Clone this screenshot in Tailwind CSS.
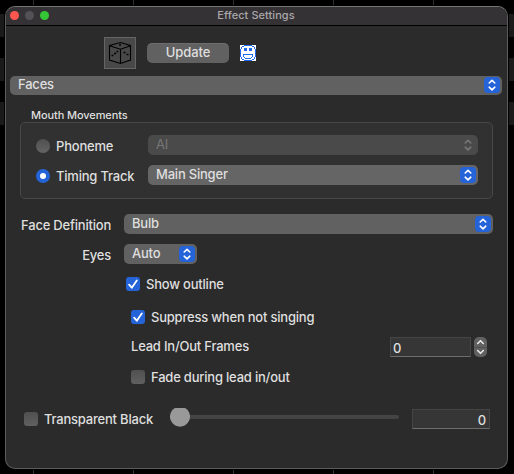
<!DOCTYPE html>
<html lang="en">
<head>
<meta charset="utf-8">
<title>Effect Settings</title>
<script src="https://cdn.jsdelivr.net/npm/@tailwindcss/browser@4"></script>
</head>
<body class="bg-black font-[Inter,sans-serif] text-[13px] leading-4 tracking-[-0.21px] text-[#dfdfdf] w-[514px] h-[474px] overflow-hidden">
<svg class="hidden">
  <symbol id="updown" viewBox="0 0 16 16"><path d="M5.2 6 8 3.3 10.8 6M5.2 10.2 8 12.9 10.8 10.2" fill="none" stroke="currentColor" stroke-width="1.6" stroke-linecap="round" stroke-linejoin="round"/></symbol>
  <symbol id="tick" viewBox="0 0 14 14"><path d="M3.1 7.6 5.8 10.7 10.8 3.4" fill="none" stroke="#fff" stroke-width="1.8" stroke-linecap="round" stroke-linejoin="round"/></symbol>
</svg>
<div class="relative w-[514px] h-[474px] pl-[5px] pt-[6px]">
  <!-- timeline grid behind the window -->
  <svg class="absolute left-0 top-0" width="514" height="474" shape-rendering="crispEdges">
    <path d="M0 14H514V37H0ZM0 58H514V81H0ZM0 102H514V125H0Z" fill="#1a1a1a"/>
    <path d="M4 0H5V474H4ZM508 0H509V474H508Z" fill="#000"/>
    <path d="M33 0h1v5h-1zM133 0h1v5h-1zM233 0h1v5h-1zM333 0h1v5h-1zM433 0h1v5h-1zM33 470h1v4h-1zM133 470h1v4h-1zM233 470h1v4h-1zM333 470h1v4h-1zM433 470h1v4h-1z" fill="#303030"/>
  </svg>

  <main class="relative w-[503px] h-[463px] rounded-[10px] border border-[#5c5c5c] border-t-[#777478] bg-[#2b2b2b] overflow-hidden">
    <header class="h-[19px] bg-[#353236] border-b border-black flex items-center pl-1 pr-[4px]">
      <div class="flex gap-[6px] w-[100px] relative -top-[0.5px]">
        <span class="size-[9px] rounded-full bg-[#fc5650]"></span>
        <span class="size-[9px] rounded-full bg-[#545156]"></span>
        <span class="size-[9px] rounded-full bg-[#35c636]"></span>
      </div>
      <h1 class="flex-1 text-center text-[11px] tracking-[0.05px] text-[#a9a7aa] font-medium pr-[101px] relative -top-px">Effect Settings</h1>
    </header>

    <div class="flex items-center h-8 mt-[11px] pl-[98px]">
      <div class="size-8 bg-[#484848] border border-[#656565] grid place-items-center">
        <svg width="30" height="30" viewBox="0 0 30 30" fill="none" stroke="#000" stroke-width="1.1"><path d="M4.5 7.5 15.5 4.5 25.5 7.5V22L15.5 25.5 4.5 22ZM4.5 7.8 15.5 11.2 25.5 7.8M15.5 11.2V25.5"/><path d="M14 7h2M6.5 17.5h2M9 15.5h2.2M11.5 13.5h1.7M18.5 14.5h2M21.5 16.5h2" stroke-width="1.6"/></svg>
      </div>
      <button class="ml-[11px] w-[82px] h-5 rounded-[5px] bg-[#616161] border-t border-[#6d6d6d] font-medium text-center leading-[16px] pb-[3px] tracking-[-0.1px]">Update</button>
      <svg class="ml-[11px]" width="16" height="16" viewBox="0 0 16 16" shape-rendering="crispEdges"><path d="M0 0h16v16H0z" fill="#fff"/><path d="M4 0h8v1H4zM2 1h2v1H2zM12 1h2v1h-2zM1 2h1v2H1zM14 2h1v2h-1zM0 4h1v8H0zM15 4h1v8h-1zM1 12h1v2H1zM14 12h1v2h-1zM2 14h2v1H2zM12 14h2v1h-2zM4 15h8v1H4zM4 3h3v3H4zM9 3h3v3H9zM3 9h10v1H3zM3 10h1v2H3zM12 10h1v2h-1zM4 12h1v1H4zM11 12h1v1h-1zM5 13h6v1H5z" fill="#1f68ef"/></svg>
    </div>

    <div class="ml-1 mt-[7px] w-[492px] h-[19px] rounded-[5px] bg-[#616161] flex items-center justify-between pl-2 pr-[2px] font-medium">
      <span class="relative -top-[1.5px]">Faces</span>
      <span class="size-4 rounded-[4px] bg-[#2463d8] text-white relative -top-[0.5px]"><svg class="size-4"><use href="#updown"/></svg></span>
    </div>

    <h2 class="mt-[12px] pl-[25px] h-[15px] text-[11px] font-medium tracking-[-0.1px]">Mouth Movements</h2>
    <section class="ml-[14px] w-[473px] h-[77px] rounded-[5px] border border-[#484848] bg-[#313131] pt-[12px] pl-[15px]">
      <div class="flex items-center h-5">
        <span class="size-[14px] rounded-full bg-linear-to-b from-[#505050] to-[#646464] relative top-[1px]"></span>
        <span class="ml-[6px] w-[92px] relative top-[1px] font-medium">Phoneme</span>
        <div class="w-[330px] h-5 rounded-[5px] bg-[#4a4a4a] text-[#777] flex items-center justify-between pl-2 pr-[2px]"><span class="relative -top-px">AI</span><svg class="size-4"><use href="#updown"/></svg></div>
      </div>
      <div class="flex items-center h-5 mt-[10px]">
        <span class="size-[14px] rounded-full bg-[#2463d8] grid place-items-center relative top-[1px]"><i class="size-[6px] rounded-full bg-white"></i></span>
        <span class="ml-[6px] w-[92px] relative top-[1px] font-medium">Timing Track</span>
        <div class="w-[330px] h-5 rounded-[5px] bg-[#656565] flex items-center justify-between pl-2 pr-[2px] font-medium"><span class="relative -top-px">Main Singer</span><span class="size-4 rounded-[4px] bg-[#2463d8] text-white"><svg class="size-4"><use href="#updown"/></svg></span></div>
      </div>
    </section>

    <div class="flex items-center h-5 mt-[15px] font-medium">
      <span class="w-[105px] text-right relative top-[1px] whitespace-nowrap">Face Definition</span>
      <div class="ml-[13px] w-[369px] h-5 rounded-[5px] bg-[#616161] flex items-center justify-between pl-2 pr-[2px]"><span class="relative -top-px">Bulb</span><span class="size-4 rounded-[4px] bg-[#2463d8] text-white"><svg class="size-4"><use href="#updown"/></svg></span></div>
    </div>
    <div class="flex items-center h-5 mt-[10px] font-medium">
      <span class="w-[105px] text-right relative top-[1px]">Eyes</span>
      <div class="ml-[13px] w-[73px] h-5 rounded-[5px] bg-[#616161] flex items-center justify-between pl-2 pr-[2px]"><span class="relative -top-px">Auto</span><span class="size-4 rounded-[4px] bg-[#2463d8] text-white"><svg class="size-4"><use href="#updown"/></svg></span></div>
    </div>

    <div class="flex items-center h-[14px] mt-[13px] pl-[120px] gap-[6px] font-medium">
      <span class="size-[14px] rounded-[3px] bg-[#2463d8]"><svg class="size-[14px]"><use href="#tick"/></svg></span><span>Show outline</span>
    </div>
    <div class="flex items-center h-[14px] mt-[19px] pl-[125px] gap-[6px] font-medium">
      <span class="size-[14px] rounded-[3px] bg-[#2463d8]"><svg class="size-[14px]"><use href="#tick"/></svg></span><span>Suppress when not singing</span>
    </div>
    <div class="flex items-center h-5 mt-[13px] pl-[125px] font-medium">
      <span class="w-[259px] relative -top-px">Lead In/Out Frames</span>
      <div class="w-[81px] h-5 bg-[#363636] border border-[#454545] border-b-[#6d6d6d] pl-[2px] pt-[2px]">0</div>
      <svg class="ml-[3px]" width="13" height="20" viewBox="0 0 13 20"><rect width="13" height="20" rx="5" fill="#616161"/><path d="M0 10.5h13" stroke="#505050"/><path d="M3.7 6.5 6.5 3.7 9.3 6.5M3.7 13.5 6.5 16.3 9.3 13.5" fill="none" stroke="#e8e8e8" stroke-width="1.6" stroke-linecap="round" stroke-linejoin="round"/></svg>
    </div>
    <div class="flex items-center h-[14px] mt-[13px] pl-[125px] gap-[6px] font-medium">
      <span class="size-[14px] rounded-[3px] bg-linear-to-b from-[#505050] to-[#606060]"></span><span>Fade during lead in/out</span>
    </div>

    <div class="flex items-center h-5 mt-[25px] pl-[18px] font-medium">
      <span class="size-[14px] rounded-[3px] bg-linear-to-b from-[#505050] to-[#606060]"></span>
      <span class="ml-[6px] w-[126px] whitespace-nowrap">Transparent Black</span>
      <svg width="229" height="20" viewBox="0 0 229 20" class="relative -top-px"><rect x="10" y="7" width="219" height="4" rx="2" fill="#444"/><path d="M5 0H15A10 10 0 1 1 5 0Z" fill="#999"/></svg>
      <div class="ml-[13px] w-[78px] h-5 bg-[#363636] border border-[#454545] border-b-[#6d6d6d] pr-[3px] pt-[2px] text-right">0</div>
    </div>
  </main>
</div>
</body>
</html>
